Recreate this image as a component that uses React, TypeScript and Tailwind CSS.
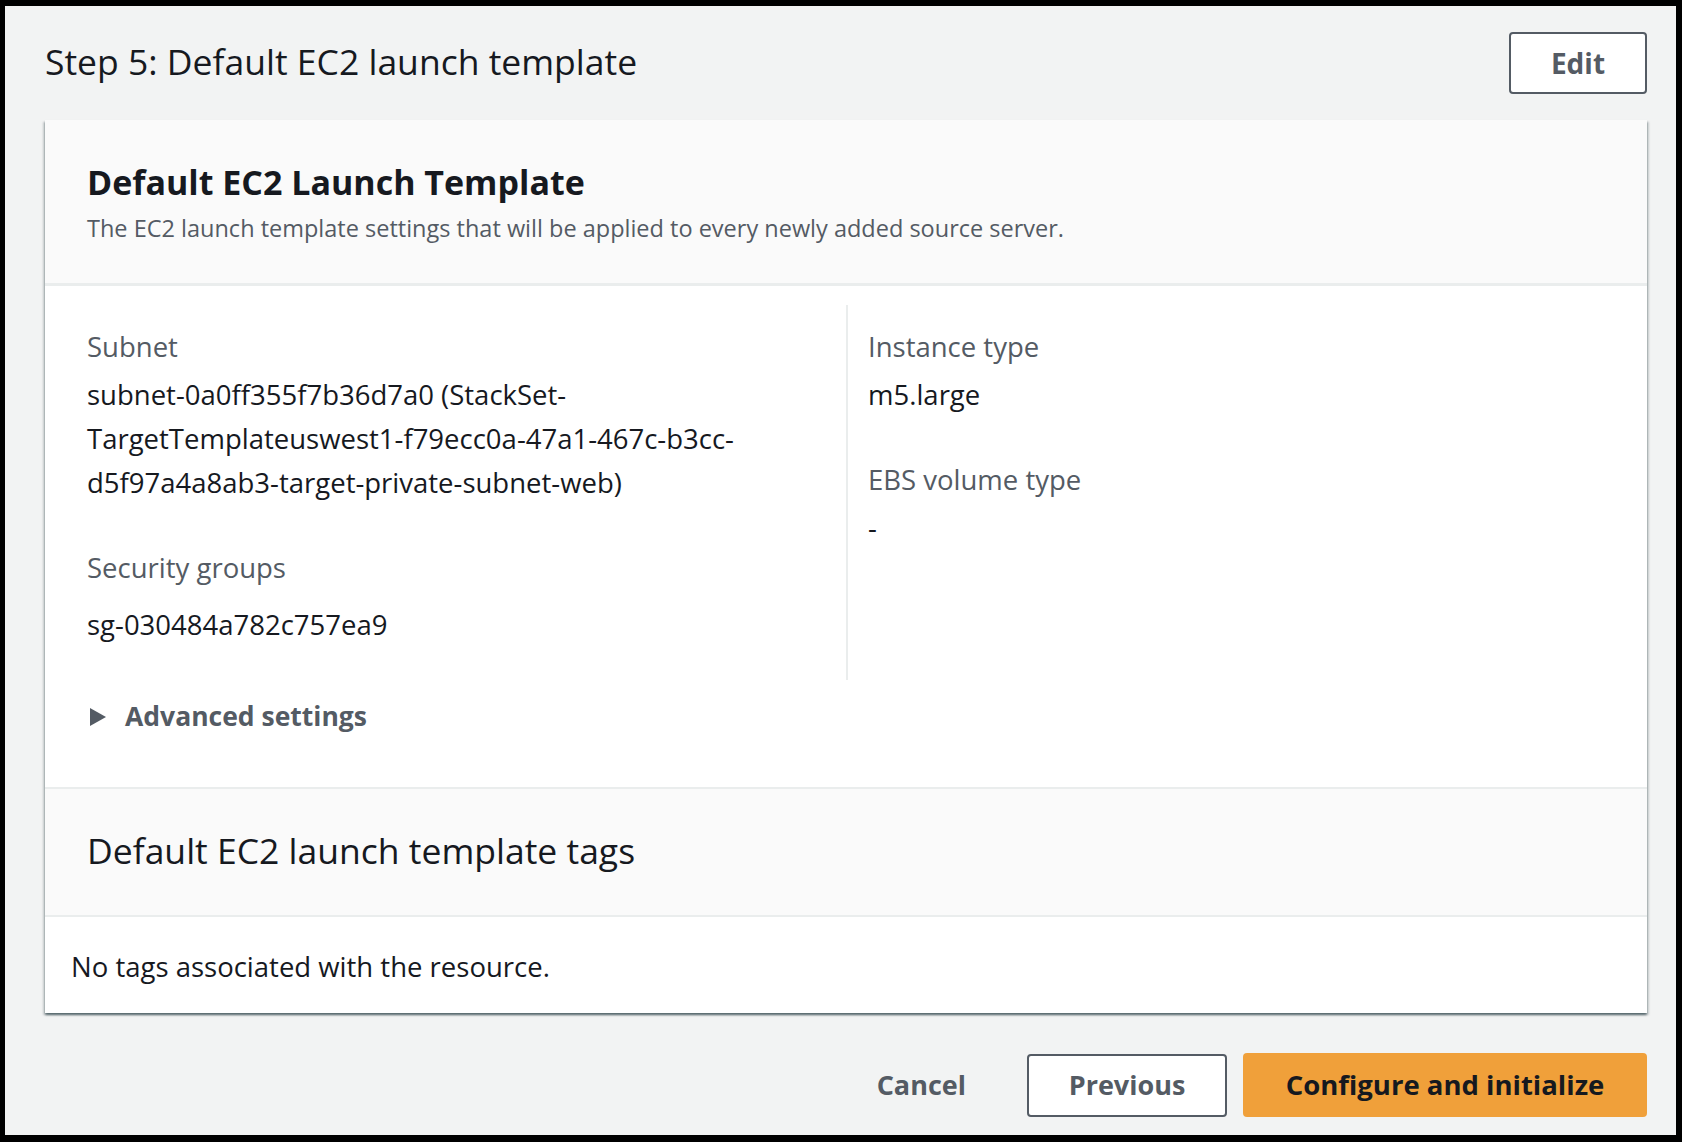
import { FC } from "react";

const labelStyle = "text-[27.5px] leading-[44px] text-[#545b64]";
const valueStyle = "text-[27.5px] leading-[44px] text-[#16191f]";

const Field: FC<{ label: string; value: string; valueClass?: string }> = ({
  label,
  value,
  valueClass = "",
}) => (
  <div className="flex flex-col">
    <div className={labelStyle}>{label}</div>
    <div className={valueStyle + " mt-[4px] " + valueClass}>{value}</div>
  </div>
);

const App = () => {
  return (
    <div
      className="w-[1682px] h-[1142px] bg-black pt-[6px] pl-[5px] pr-[6px] pb-[7px]"
      style={{ fontFamily: "'Open Sans', 'Noto Sans', sans-serif" }}
    >
      <div className="h-full bg-[#f2f3f3] pl-[40px] pr-[29px] pt-[26px]">
        {/* page header */}
        <div className="flex items-center justify-between h-[62px]">
          <h1 className="pb-[4px] text-[35.5px] leading-[44px] text-[#16191f] font-normal">
            Step 5: Default EC2 launch template
          </h1>
          <button
            type="button"
            className="w-[138px] h-[62px] border-2 border-[#545b64] rounded-[4px] bg-white text-[28px] font-bold text-[#545b64]"
          >
            Edit
          </button>
        </div>

        {/* container */}
        <div className="mt-[26px] bg-white shadow-[0_2px_2px_0_rgba(0,28,36,0.5),2px_2px_2px_0_rgba(0,28,36,0.15),-2px_2px_2px_0_rgba(0,28,36,0.15)]">
          <div className="bg-[#fafafa] px-[42px] pt-[42px] h-[166px] border-b-[3px] border-[#eaeded]">
            <h2 className="text-[34px] leading-[40px] font-bold text-[#16191f]">
              Default EC2 Launch Template
            </h2>
            <p className="mt-[12px] text-[23.5px] leading-[28px] text-[#545b64]">
              The EC2 launch template settings that will be applied to every
              newly added source server.
            </p>
          </div>

          <div className="px-[42px] pt-[19px] pb-[48px]">
            <div className="grid grid-cols-2">
              <div className="pt-[20px] pb-[33px] pr-[20px] flex flex-col gap-[41px]">
                <Field
                  label="Subnet"
                  value="subnet-0a0ff355f7b36d7a0 (StackSet-TargetTemplateuswest1-f79ecc0a-47a1-467c-b3cc-d5f97a4a8ab3-target-private-subnet-web)"
                />
                <Field
                  label="Security groups"
                  value="sg-030484a782c757ea9"
                  valueClass="mt-[13px]"
                />
              </div>
              <div className="border-l-2 border-[#eaeded] pl-[20px] pt-[20px] pb-[33px] flex flex-col gap-[41px]">
                <Field label="Instance type" value="m5.large" />
                <Field label="EBS volume type" value="-" />
              </div>
            </div>

            <button
              type="button"
              className="mt-[15px] flex items-center gap-[19px] h-[44px] text-[26.5px] font-bold text-[#545b64]"
            >
              <svg width="16" height="18" viewBox="0 0 16 18" className="ml-[3px]">
                <polygon points="0,0 16,9 0,18" fill="#545b64" />
              </svg>
              Advanced settings
            </button>
          </div>

          <div className="bg-[#fafafa] border-t-2 border-b-2 border-[#eaeded] h-[130px] px-[42px] pb-[4px] flex items-center">
            <h2 className="text-[35.5px] leading-[44px] font-normal text-[#16191f]">
              Default EC2 launch template tags
            </h2>
          </div>

          <div className="h-[96px] px-[26px] pt-[4px] flex items-center">
            <span className={valueStyle}>No tags associated with the resource.</span>
          </div>
        </div>

        {/* actions */}
        <div className="mt-[40px] flex justify-end items-center">
          <button
            type="button"
            className="mr-[61px] text-[27px] font-bold text-[#545b64]"
          >
            Cancel
          </button>
          <button
            type="button"
            className="w-[200px] h-[63px] border-2 border-[#545b64] rounded-[4px] bg-white text-[27px] font-bold text-[#545b64]"
          >
            Previous
          </button>
          <button
            type="button"
            className="ml-[16px] w-[404px] h-[64px] rounded-[4px] bg-[#f0a03a] text-[27.5px] font-bold text-[#16191f]"
          >
            Configure and initialize
          </button>
        </div>
      </div>
    </div>
  );
};

export default App;
